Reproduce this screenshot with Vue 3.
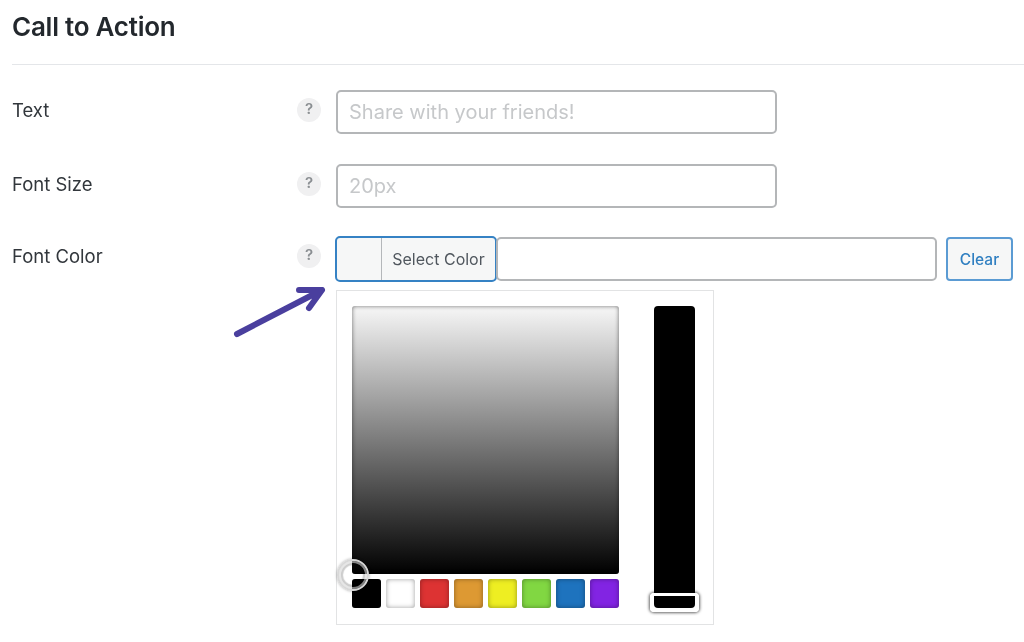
<script setup>
const swatches = ['#000000', '#ffffff', '#dd3333', '#dd9933', '#eeee22', '#81d742', '#1e73be', '#8224e3']
</script>

<template>
  <div class="page">
    <h2 class="title">Call to Action</h2>
    <div class="row">
      <label class="label">Text</label>
      <span class="help">?</span>
      <div class="field"><input class="input" placeholder="Share with your friends!" /></div>
    </div>
    <div class="row">
      <label class="label">Font Size</label>
      <span class="help">?</span>
      <div class="field"><input class="input" placeholder="20px" /></div>
    </div>
    <div class="row last">
      <label class="label">Font Color</label>
      <span class="help">?</span>
      <div class="field">
        <div class="color-line">
          <button class="select"><span class="chip"></span><span class="select-text">Select Color</span></button>
          <input class="hex" />
          <button class="clear">Clear</button>
        </div>
        <div class="picker">
          <div class="left">
            <div class="square"><span class="marker"></span></div>
            <div class="swatches">
              <span v-for="c in swatches" :key="c" class="swatch" :style="{ backgroundColor: c }"></span>
            </div>
          </div>
          <div class="strip"><span class="handle"></span></div>
        </div>
      </div>
      <svg class="arrow" width="100" height="56" viewBox="0 0 100 56" fill="none">
        <path d="M5 47 L90 3 M67 3 L90 3 L77 21" stroke="#4a3f9e" stroke-width="6" stroke-linecap="round" stroke-linejoin="round" />
      </svg>
    </div>
  </div>
</template>

<style>
html, body { margin: 0; background: #fff; }
</style>

<style scoped>
.page {
  width: 1024px;
  height: 642px;
  box-sizing: border-box;
  overflow: hidden;
  padding-left: 12px;
  background: #fff;
  font-family: Inter, "Liberation Sans", sans-serif;
  color: #2c3338;
  filter: blur(0.4px);
}
.title {
  margin: 0 0 25px;
  height: 64px;
  box-sizing: content-box;
  border-bottom: 1px solid #e4e6e9;
  font-size: 26px;
  line-height: 54px;
  font-weight: 600;
  letter-spacing: -0.25px;
  color: #23282d;
}
.row {
  display: flex;
  align-items: flex-start;
  height: 73.5px;
  position: relative;
}
.row.last { height: auto; margin-top: -1px; }
.label {
  width: 285px;
  flex: none;
  padding-top: 9px;
  font-size: 18.5px;
  line-height: 22px;
  color: #32373c;
}
.help {
  flex: none;
  width: 24px;
  height: 24px;
  margin-top: 8px;
  margin-right: 15px;
  border-radius: 50%;
  background: #f0f0f1;
  color: #8a8e92;
  font-size: 15px;
  font-weight: 600;
  line-height: 21px;
  text-align: center;
}
.field { flex: none; }
.input {
  display: block;
  width: 441px;
  height: 44px;
  box-sizing: border-box;
  border: 2px solid #b4b6b8;
  border-radius: 5px;
  padding: 0 11px;
  outline: none;
  background: #fff;
  font-family: inherit;
  font-size: 20px;
}
.input::placeholder { color: #c6c8ca; opacity: 1; }
.color-line {
  display: flex;
  align-items: flex-start;
  margin-left: -1px;
}
.select {
  display: flex;
  width: 162px;
  height: 46px;
  box-sizing: border-box;
  padding: 0;
  border: 2px solid #3582c4;
  border-radius: 5px;
  background: #f6f7f7;
  font-family: inherit;
  color: #50575e;
}
.chip {
  width: 44px;
  height: 100%;
  flex: none;
  border-right: 1px solid #b4b7ba;
}
.select-text {
  flex: 1;
  font-size: 16px;
  line-height: 42px;
  text-align: center;
  white-space: nowrap;
}
.hex {
  display: block;
  width: 441px;
  height: 44px;
  box-sizing: border-box;
  margin-top: 1px;
  margin-left: -1px;
  border: 2px solid #b4b6b8;
  border-radius: 5px;
  outline: none;
  background: #fff;
}
.clear {
  width: 67px;
  height: 44px;
  box-sizing: border-box;
  margin-top: 1px;
  margin-left: 9px;
  padding: 0;
  border: 2px solid #5b9bd3;
  border-radius: 4px;
  background: #f6f7f7;
  color: #2f7fc1;
  font-family: inherit;
  font-size: 15.5px;
  font-weight: 500;
}
.picker {
  display: flex;
  align-items: flex-start;
  width: 378px;
  height: 335px;
  box-sizing: border-box;
  margin-top: 8px;
  padding: 15px;
  border: 1px solid #e2e3e4;
  background: #fff;
}
.left { width: 267px; flex: none; }
.square {
  position: relative;
  height: 268px;
  border-radius: 3px;
  background: linear-gradient(#f7f7f7, #000);
  box-shadow: inset 0 0 4px rgba(0, 0, 0, 0.55);
}
.marker {
  position: absolute;
  left: -15px;
  bottom: -17px;
  width: 32px;
  height: 32px;
  box-sizing: border-box;
  border-radius: 50%;
  border: 2px solid #d8d8d8;
  box-shadow: 0 0 3px rgba(0, 0, 0, 0.35), inset 0 0 0 2px rgba(255, 255, 255, 0.5), inset 0 0 1px 4px rgba(0, 0, 0, 0.2);
}
.swatches {
  display: flex;
  justify-content: space-between;
  margin-top: 5px;
}
.swatch {
  width: 29px;
  height: 29px;
  border-radius: 3px;
  box-shadow: inset 0 0 5px rgba(0, 0, 0, 0.38);
}
.strip {
  position: relative;
  flex: none;
  width: 41px;
  height: 302px;
  margin-left: 35px;
  border-radius: 4px;
  background: #000;
}
.handle {
  position: absolute;
  left: -4px;
  bottom: -4px;
  width: 49px;
  height: 19px;
  box-sizing: border-box;
  border: 3px solid #fff;
  border-radius: 4px;
  box-shadow: 0 0 3px 1px rgba(0, 0, 0, 0.6);
}
.arrow {
  position: absolute;
  left: 220px;
  top: 51px;
}
</style>
